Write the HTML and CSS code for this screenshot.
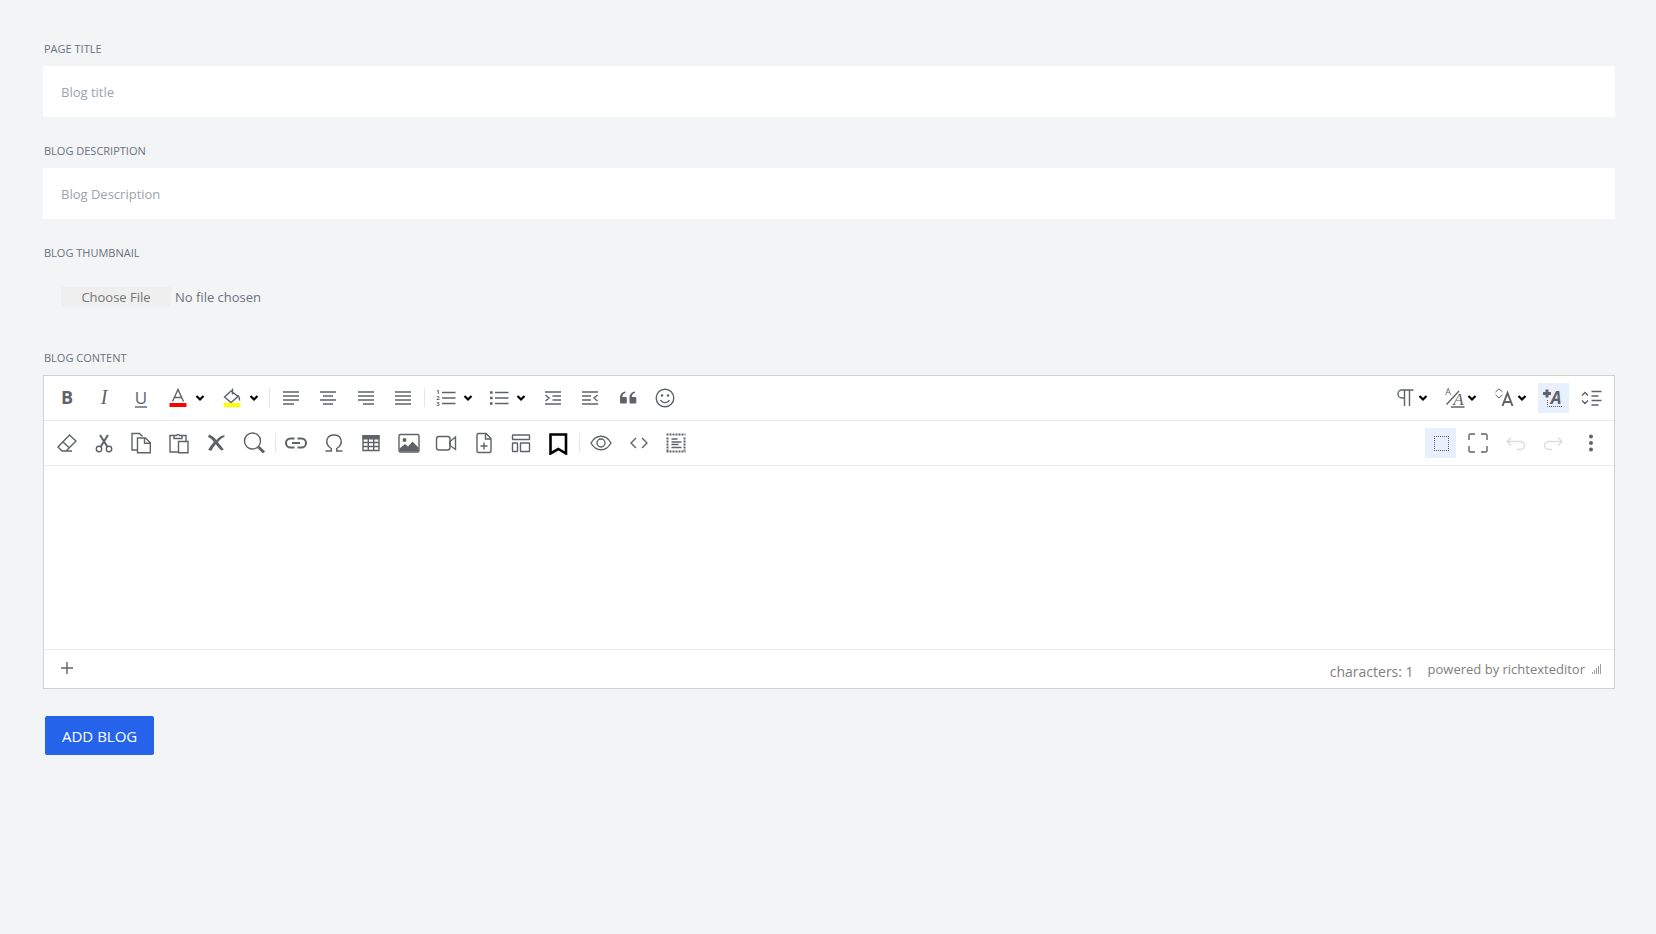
FILE: index.html
```
<!DOCTYPE html>
<html lang="en">
<head>
    <meta charset="UTF-8">
    <meta name="viewport" content="width=device-width, initial-scale=1.0">
    <title>Add Blog</title>
    <link rel="stylesheet" href="styles.css">
</head>
<body>
    <form class="blog-form">
        <div class="field">
            <label for="title">PAGE TITLE</label>
            <input type="text" id="title" name="title" placeholder="Blog title">
        </div>

        <div class="field">
            <label for="description">BLOG DESCRIPTION</label>
            <input type="text" id="description" name="description" placeholder="Blog Description">
        </div>

        <div class="field">
            <label for="thumbnail">BLOG THUMBNAIL</label>
            <input type="file" id="thumbnail" name="thumbnail">
        </div>

        <div class="field">
            <label for="content">BLOG CONTENT</label>
            <div class="editor">
                <!-- First toolbar row -->
                <div class="toolbar">
                    <div class="tools">
                        <button type="button" class="tool" title="Bold"><svg viewBox="0 0 24 24"><text class="bold" x="12" y="18">B</text></svg></button>
                        <button type="button" class="tool" title="Italic"><svg viewBox="0 0 24 24"><text class="italic" x="12" y="18">I</text></svg></button>
                        <button type="button" class="tool" title="Underline"><svg viewBox="0 0 24 24"><text class="letter" x="12" y="18">U</text><path d="M6 21h12"/></svg></button>
                        <button type="button" class="tool drop" title="Text color"><svg viewBox="0 0 24 24"><path d="M6.5 15.5 12 3.5l5.5 12M8.500 11.5h7"/><path class="red" d="M3.5 17h17v4h-17z"/></svg><svg class="arrow" viewBox="0 0 10 8"><path d="M1.5 2 5 5.5 8.5 2"/></svg></button>
                        <button type="button" class="tool drop" title="Background color"><svg viewBox="0 0 24 24"><path d="M11 5 4.5 11l6.5 5.5L18 10.5 11 5zM12.5 2.500v6M17 9.500c2.200 0 2.500 2 2.500 5"/><path class="yellow" d="M3.5 17h17v4h-17z"/></svg><svg class="arrow" viewBox="0 0 10 8"><path d="M1.5 2 5 5.5 8.5 2"/></svg></button>
                        <span class="divider"></span>
                        <button type="button" class="tool" title="Align left"><svg viewBox="0 0 24 24"><path d="M4 6h16M4 10h16M4 14h16M4 18h11"/></svg></button>
                        <button type="button" class="tool" title="Align center"><svg viewBox="0 0 24 24"><path d="M4 6h16M7 10h10M4 14h16M7 18h10"/></svg></button>
                        <button type="button" class="tool" title="Align right"><svg viewBox="0 0 24 24"><path d="M4 6h16M4 10h16M4 14h16M9 18h11"/></svg></button>
                        <button type="button" class="tool" title="Justify"><svg viewBox="0 0 24 24"><path d="M4 6h16M4 10h16M4 14h16M4 18h16"/></svg></button>
                        <span class="divider"></span>
                        <button type="button" class="tool drop" title="Ordered list"><svg viewBox="0 0 24 24"><path d="M8 6.5h13.5M8 12h13.5M8 17.5h13.5"/><text class="num" x="4" y="8">1</text><text class="num" x="4" y="14">2</text><text class="num" x="4" y="20">3</text></svg><svg class="arrow" viewBox="0 0 10 8"><path d="M1.5 2 5 5.5 8.5 2"/></svg></button>
                        <button type="button" class="tool drop" title="Unordered list"><svg viewBox="0 0 24 24"><path d="M8 6.5h13.5M8 12h13.5M8 17.5h13.5"/><path class="fill" d="M3 5.2h2.600v2.600H3zM3 10.7h2.600v2.600H3zM3 16.2h2.600v2.600H3z"/></svg><svg class="arrow" viewBox="0 0 10 8"><path d="M1.5 2 5 5.5 8.5 2"/></svg></button>
                        <button type="button" class="tool" title="Indent"><svg viewBox="0 0 24 24"><path d="M4 6h16M11.5 10H20M11.5 14H20M4 18h16M4.5 9 8 12l-3.5 3"/></svg></button>
                        <button type="button" class="tool" title="Outdent"><svg viewBox="0 0 24 24"><path d="M4 6h16M4 10h9M4 14h9M4 18h16M19.5 9 16 12l3.5 3"/></svg></button>
                        <button type="button" class="tool" title="Quote"><svg viewBox="0 0 24 24"><path class="fill" d="M9.5 5.5v1.3C7.5 7.5 6.5 9 6.3 11h3.500q1 0 1 1v4.500q0 1-1 1H5q-1 0-1-1V12c0-3.500 2-6 5.500-6.500zM19 5.5v1.3c-2 .7-3 2.200-3.200 4.200h3.500q1 0 1 1v4.500q0 1-1 1h-4.800q-1 0-1-1V12c0-3.500 2-6 5.500-6.500z"/></svg></button>
                        <button type="button" class="tool" title="Emoji"><svg viewBox="0 0 24 24"><circle cx="12" cy="12" r="8.800"/><circle class="fill" cx="9" cy="9.500" r="1.300"/><circle class="fill" cx="15" cy="9.500" r="1.300"/><path d="M7.5 14c2 3.5 7 3.5 9 0"/></svg></button>
                    </div>
                    <div class="tools">
                        <button type="button" class="tool drop tight" title="Paragraph"><svg viewBox="0 0 24 24"><path d="M19.5 4H8a4 4 0 0 0 0 8h2.500M10.5 4v16M15.5 4v16"/></svg><svg class="arrow" viewBox="0 0 10 8"><path d="M1.5 2 5 5.5 8.5 2"/></svg></button>
                        <button type="button" class="tool drop tight" title="Font family"><svg viewBox="0 0 24 24"><text class="small" x="5" y="9">A</text><path d="M3.5 18.5 16 5M8 21h13.5"/><text class="serif" x="15.5" y="19">A</text></svg><svg class="arrow" viewBox="0 0 10 8"><path d="M1.5 2 5 5.5 8.5 2"/></svg></button>
                        <button type="button" class="tool drop tight" title="Font size"><svg viewBox="0 0 24 24"><path class="thin" d="M2.5 6 6 2.8 9.5 6M2.500 8.800 6 12l3.500-3.200"/><path class="thick" d="m9.500 20 5-13 5 13M11.500 16h6.500"/></svg><svg class="arrow" viewBox="0 0 10 8"><path d="M1.5 2 5 5.5 8.5 2"/></svg></button>
                        <button type="button" class="tool active" title="Inline style"><svg viewBox="0 0 24 24"><path class="heavy" d="M2 7.5h8M6 3.5v8"/><text class="slant" x="15" y="18">A</text><path class="dots" d="M6.500 14v6.500H21"/></svg></button>
                        <button type="button" class="tool" title="Line height"><svg viewBox="0 0 24 24"><path d="M3 9.5 6 6.5l3 3M3 14.5l3 3 3-3M12.5 5.5h10M12.5 10h7M12.5 14.5h10M12.5 19h7"/></svg></button>
                    </div>
                </div>

                <!-- Second toolbar row -->
                <div class="toolbar">
                    <div class="tools">
                        <button type="button" class="tool" title="Remove format"><svg viewBox="0 0 24 24"><path d="m14.5 4 6.5 6L11 20H7l-4-4L14.5 4zM8 11l6.500 6M10 20h7"/></svg></button>
                        <button type="button" class="tool" title="Cut"><svg viewBox="0 0 24 24"><circle cx="7" cy="18" r="2.700"/><circle cx="17" cy="18" r="2.700"/><path class="thick" d="m8.500 16 7.500-12M15.500 16 8 4"/></svg></button>
                        <button type="button" class="tool" title="Copy"><svg viewBox="0 0 24 24"><path d="M8 19H3V2.500h7.500L13.500 5.500M8.500 7h8l4.800 4.800v10H8.500zM15.500 7v5.300h5.500"/></svg></button>
                        <button type="button" class="tool" title="Paste"><svg viewBox="0 0 24 24"><path d="M11 21H3V4.500h4.500M14.500 4.500H19V10M7 4.500v3h8v-3h-2.500a1.600 1.600 0 0 0-3 0zM11.500 10.500h9.500v11.300h-9.500z"/></svg></button>
                        <button type="button" class="tool" title="Delete"><svg viewBox="0 0 24 24"><path class="fill" d="M5 3.500c3 1 5.500 3 7.300 5.500C14.500 6.500 17 4.500 20.500 4.200v1.600c-2.500 1.200-4.800 3-6.500 5.400 1.800 2.500 3.800 4.700 5.800 7.200l-2.600 1c-2-2-3.800-4-5.400-6.200C10 15.200 8.500 17.500 7.200 20l-3-1.200c1.500-3 3.500-5.500 5.700-7.800C8.300 8.700 6.500 7 4 6z"/></svg></button>
                        <button type="button" class="tool" title="Find"><svg viewBox="0 0 24 24"><circle cx="10.500" cy="10" r="8"/><path class="heavy" d="m16.500 16 5.500 5.500"/></svg></button>
                        <span class="divider"></span>
                        <button type="button" class="tool" title="Insert link"><svg viewBox="0 0 24 24"><path class="thick" d="M10.5 7.500H6.500a4.500 4.500 0 0 0 0 9h4M13.500 7.500h4a4.500 4.500 0 0 1 0 9h-4M8 12h8"/></svg></button>
                        <button type="button" class="tool" title="Special character"><svg viewBox="0 0 24 24"><path d="M3.5 20h5.800v-2.500C2 13 4 4 12 4s10 9 2.700 13.500V20h5.800"/></svg></button>
                        <button type="button" class="tool" title="Insert table"><svg viewBox="0 0 24 24"><path d="M4 5h16v14.500H4zM4 11.500h16M4 15.500h16M9.300 8v11.500M14.700 8v11.500"/><path class="fill" d="M3.500 4h17v4.500h-17z"/></svg></button>
                        <button type="button" class="tool" title="Insert image"><svg viewBox="0 0 24 24"><rect x="2" y="3.500" width="20" height="17.500" rx="1.500"/><circle class="fill" cx="7.500" cy="9" r="2"/><path class="fill" d="M2.500 20.500v-3L8 13l3 2.500 4.500-5 6 6v4z"/></svg></button>
                        <button type="button" class="tool" title="Insert video"><svg viewBox="0 0 24 24"><rect x="2.500" y="5.500" width="13.500" height="13.500" rx="2.500"/><path d="m16 10.500 5.500-4.500v12.500L16 14.500z"/></svg></button>
                        <button type="button" class="tool" title="Insert document"><svg viewBox="0 0 24 24"><path d="M6.500 2.500H14l5 5V20a1.500 1.500 0 0 1-1.500 1.500h-11A1.500 1.500 0 0 1 5 20V4a1.500 1.500 0 0 1 1.500-1.500zM13.500 2.500V8H19M12 11.500v7M8.500 15h7"/></svg></button>
                        <button type="button" class="tool" title="Insert template"><svg viewBox="0 0 24 24"><rect x="3.500" y="4" width="17" height="4.500" rx=".5"/><rect x="3.500" y="12" width="5" height="8.500" rx=".5"/><rect x="11.500" y="12" width="9" height="8.500" rx=".5"/></svg></button>
                        <button type="button" class="tool" title="Bookmark"><svg viewBox="0 0 24 24"><path class="mark" d="M4.500 3.500h15.500v19l-7.700-4.500-7.800 4.500z"/></svg></button>
                        <span class="divider"></span>
                        <button type="button" class="tool" title="Preview"><svg viewBox="0 0 24 24"><path d="M2 12c5-9 15-9 20 0-5 9-15 9-20 0z"/><circle cx="12" cy="12" r="4"/></svg></button>
                        <button type="button" class="tool" title="Source code"><svg viewBox="0 0 24 24"><path d="m9 7-5 5 5 5M15 7l5 5-5 5"/></svg></button>
                        <button type="button" class="tool" title="Select all"><svg viewBox="0 0 24 24"><path class="dots wide" d="M2.500 3.500h19M2.500 20.500h19M3.500 6.500v13M20.500 6.500v13"/><path d="M7.500 8h6M7.500 11h10M7.500 13.500h7M7.500 16.500h10"/></svg></button>
                    </div>
                    <div class="tools">
                        <button type="button" class="tool active" title="Show borders"><svg viewBox="0 0 24 24"><path class="dots" d="M5 5.500h15M5 19.500h15M5.500 7v12M19.500 7v12"/></svg></button>
                        <button type="button" class="tool" title="Full screen"><svg viewBox="0 0 24 24"><path d="M9 3H4.500Q3 3 3 4.500V9M15 3h4.500Q21 3 21 4.500V9M9 21H4.500Q3 21 3 19.500V15M15 21h4.500q1.500 0 1.500-1.500V15"/></svg></button>
                        <button type="button" class="tool" title="Undo" disabled><svg viewBox="0 0 24 24"><path d="M7 6.500 3 10.500l4 4M3 10.500h13.500a4 4 0 0 1 0 8H13"/></svg></button>
                        <button type="button" class="tool" title="Redo" disabled><svg viewBox="0 0 24 24"><path d="m17 6.500 4 4-4 4M21 10.500H7.500a4 4 0 0 0 0 8H11"/></svg></button>
                        <button type="button" class="tool" title="More"><svg viewBox="0 0 24 24"><circle class="fill" cx="12" cy="5.500" r="2"/><circle class="fill" cx="12" cy="12" r="2"/><circle class="fill" cx="12" cy="18.500" r="2"/></svg></button>
                    </div>
                </div>

                <textarea id="content" name="content"></textarea>

                <div class="statusbar">
                    <button type="button" class="tool" title="Add tag"><svg viewBox="0 0 24 24"><path d="M12 5v12M6 11h12"/></svg></button>
                    <span class="count">characters: 1</span>
                    <a href="#" class="brand">powered by richtexteditor</a>
                    <svg class="grip" viewBox="0 0 10 10"><path d="M9.5 0v10M7.500 2v8M5.500 4v6M3.500 6v4M1.500 8v2"/></svg>
                </div>
            </div>
        </div>

        <button type="submit" class="submit">ADD BLOG</button>
    </form>
</body>
</html>
```
FILE: styles.css
```
* {
    box-sizing: border-box;
}
body {
    margin: 0;
    background-color: #f3f4f6;
    font-family: "Segoe UI", "Open Sans", sans-serif;
    color: #6b7280;
}
.blog-form {
    padding: 40px 41px 40px 43px;
}
.field {
    margin-bottom: 25px;
}
.field label {
    display: block;
    padding-left: 1px;
    margin-bottom: 8px;
    font-size: 11px;
    line-height: 18px;
}
input {
    display: block;
    width: 100%;
    padding: 0 18px;
    border: none;
    font-family: inherit;
    font-size: 13px;
    color: #6b7280;
}
input[type="text"] {
    height: 51px;
    background-color: #fff;
}
input::placeholder {
    color: #9ca3af;
}
input[type="file"] {
    height: 54px;
    padding: 17px 18px;
    line-height: 20px;
}
input::file-selector-button {
    width: 110px;
    height: 20px;
    padding: 0;
    border: none;
    background-color: #efefef;
    font: inherit;
    color: #757575;
}

/* Editor */
.editor {
    border: 1px solid #cfd1d4;
    background-color: #fff;
}
.toolbar {
    display: flex;
    justify-content: space-between;
    padding: 7px 7px 7px 6px;
    border-bottom: 1px solid #e8eaed;
    font-size: 17px;
    line-height: 30px;
}
.tools {
    height: 30px;
    white-space: nowrap;
}
.tool {
    display: inline-flex;
    align-items: center;
    justify-content: center;
    width: 31px;
    height: 30px;
    margin: 0 1px;
    padding: 0;
    border: none;
    background: none;
    color: #5f6368;
    vertical-align: top;
    cursor: pointer;
}
.tool.drop {
    width: 47px;
    padding-right: 2px;
    gap: 5px;
}
.tool.tight {
    width: 43px;
    padding: 0;
    gap: 0;
}
.tool.active {
    background-color: #e8f0fe;
}
.tool:disabled {
    color: #dcdcdc;
}
.divider {
    display: inline-block;
    width: 1px;
    height: 19px;
    margin: 5px 0;
    background-color: #e4e5e8;
    vertical-align: top;
}

/* Icons */
svg {
    flex: none;
    width: 24px;
    height: 24px;
    fill: none;
    stroke: currentColor;
    stroke-width: 1.4;
}
svg text {
    fill: currentColor;
    stroke: none;
    text-anchor: middle;
    font-family: "Open Sans", sans-serif;
}
svg .fill {
    fill: currentColor;
    stroke: none;
}
svg .thin {
    stroke-width: 1;
}
svg .thick {
    stroke-width: 2;
}
svg .heavy {
    stroke-width: 3;
}
svg .dots {
    stroke-width: 1;
    stroke-dasharray: 1 1;
}
svg .wide {
    stroke-width: 2;
    stroke-dasharray: 2 1;
}
svg .mark {
    stroke: #000;
    stroke-width: 2.6;
}
svg .red {
    fill: #f00;
    stroke: none;
}
svg .yellow {
    fill: #ff0;
    stroke: none;
}
svg .bold {
    font-size: 18px;
    font-weight: bold;
}
svg .italic {
    font-family: "Liberation Serif", serif;
    font-size: 20px;
    font-style: italic;
}
svg .letter {
    font-size: 17px;
}
svg .num {
    font-size: 6px;
    font-weight: bold;
}
svg .small {
    font-size: 9px;
}
svg .serif {
    font-family: "Liberation Serif", serif;
    font-size: 17px;
    font-style: italic;
}
svg .slant {
    font-size: 17px;
    font-style: italic;
    font-weight: bold;
}
.arrow {
    width: 10px;
    height: 8px;
    stroke: #000;
    stroke-width: 2.2;
}

textarea {
    display: block;
    width: 100%;
    height: 183px;
    padding: 8px;
    border: none;
    resize: none;
    font-family: inherit;
    font-size: 14px;
}

/* Status bar */
.statusbar {
    display: flex;
    align-items: center;
    height: 39px;
    padding: 0 13px 0 6px;
    border-top: 1px solid #e8eaed;
    color: #808080;
}
.count {
    margin-left: auto;
    padding-top: 5px;
    font-size: 14px;
}
.brand {
    margin: 0 6px 0 14px;
    font-size: 13px;
    color: #808080;
    text-decoration: none;
}
.grip {
    width: 10px;
    height: 10px;
    stroke: #a0a0a0;
    stroke-width: 1;
}

.submit {
    height: 39px;
    margin: 2px;
    padding: 0 17px;
    border: none;
    border-radius: 2px;
    background-color: #2563eb;
    font-family: inherit;
    font-size: 15px;
    color: #fff;
    cursor: pointer;
}
```
